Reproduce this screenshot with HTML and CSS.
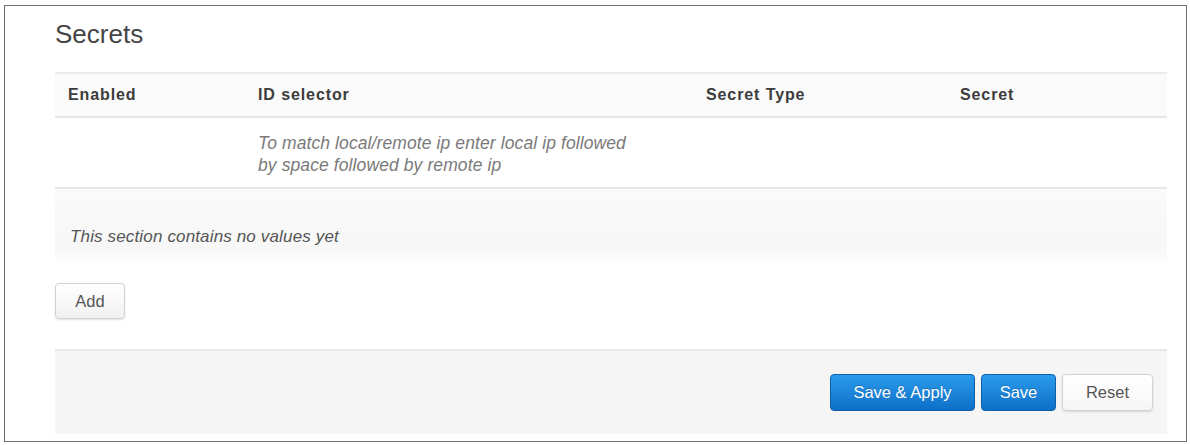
FILE: index.html
```html
<!DOCTYPE html>
<html>
<head>
<meta charset="utf-8">
<link rel="stylesheet" href="styles.css">
</head>
<body>
<div class="frame">
  <h2 class="title">Secrets</h2>
  <div class="table">
    <div class="row head">
      <div class="cell c1">Enabled</div>
      <div class="cell c2">ID selector</div>
      <div class="cell c3">Secret Type</div>
      <div class="cell c4">Secret</div>
    </div>
    <div class="row desc">
      <div class="cell c1"></div>
      <div class="cell c2 hint">To match local/remote ip enter local ip followed<br>by space followed by remote ip</div>
      <div class="cell c3"></div>
      <div class="cell c4"></div>
    </div>
    <div class="empty">This section contains no values yet</div>
  </div>
  <div class="addbar"><button class="btn plain add">Add</button></div>
  <div class="footer">
    <button class="btn blue">Save &amp; Apply</button>
    <button class="btn blue save">Save</button>
    <button class="btn plain reset">Reset</button>
  </div>
</div>
</body>
</html>
```

FILE: styles.css
```css
html, body {
  margin: 0;
  padding: 0;
  background: #ffffff;
}
body {
  padding: 5px 3px 0 4px;
  font-family: "Liberation Sans", Arial, sans-serif;
  color: #444;
}
.frame {
  box-sizing: border-box;
  width: 1183px;
  height: 437px;
  border: 1px solid #6f6f6f;
  padding: 13px 19px 0 50px;
  background: #fff;
}
.title {
  margin: 0;
  font-size: 26px;
  font-weight: normal;
  line-height: 30px;
  color: #454545;
}
.table {
  margin-top: 23px;
}
.row {
  display: grid;
  grid-template-columns: 190px 448px 254px 1fr;
}
.cell {
  padding-left: 13px;
}
.head {
  background: #fafafa;
  border-top: 2px solid #ebebeb;
  border-bottom: 2px solid #e6e6e6;
  height: 42px;
  align-items: center;
  font-weight: bold;
  font-size: 16px;
  letter-spacing: 0.9px;
  color: #3c3c3c;
}
.desc {
  padding: 14px 0 11px;
  height: 44px;
}
.hint {
  font-style: italic;
  font-size: 17.5px;
  line-height: 22px;
  color: #7a7a7a;
  white-space: nowrap;
  letter-spacing: 0.1px;
}
.empty {
  border-top: 2px solid #e8e8e8;
  background: linear-gradient(#fafafa, #f7f7f7 80%, #fcfcfc);
  padding: 37px 0 13px 15px;
  font-style: italic;
  font-size: 17px;
  line-height: 22px;
  color: #555;
  letter-spacing: 0.15px;
}
.addbar {
  padding: 22px 0 30px;
}
.btn {
  font-family: "Liberation Sans", Arial, sans-serif;
  font-size: 16.5px;
  height: 37px;
  border-radius: 4px;
  padding: 0 20px;
  cursor: pointer;
}
.plain {
  background: linear-gradient(#ffffff, #f1f1f1);
  border: 1px solid #d2d2d2;
  color: #555;
  box-shadow: 0 1px 2px rgba(0,0,0,0.12);
}
.add {
  width: 70px;
  height: 36px;
  padding: 0;
}
.footer {
  height: 85px;
  box-sizing: border-box;
  border-top: 2px solid #e8e8e8;
  background: #f5f5f5;
  display: flex;
  justify-content: flex-end;
  align-items: flex-start;
  gap: 6px;
  padding: 23px 14px 0 0;
}
.blue {
  background: linear-gradient(#2a9cec, #0e6fc8);
  border: 1px solid #0b5ea8;
  color: #fff;
  text-shadow: 0 -1px 0 rgba(0,0,0,0.2);
  width: 145px;
  padding: 0;
}
.save {
  width: 75px;
}
.reset {
  width: 91px;
  padding: 0;
  background: linear-gradient(#ffffff, #f6f6f6);
}
```
